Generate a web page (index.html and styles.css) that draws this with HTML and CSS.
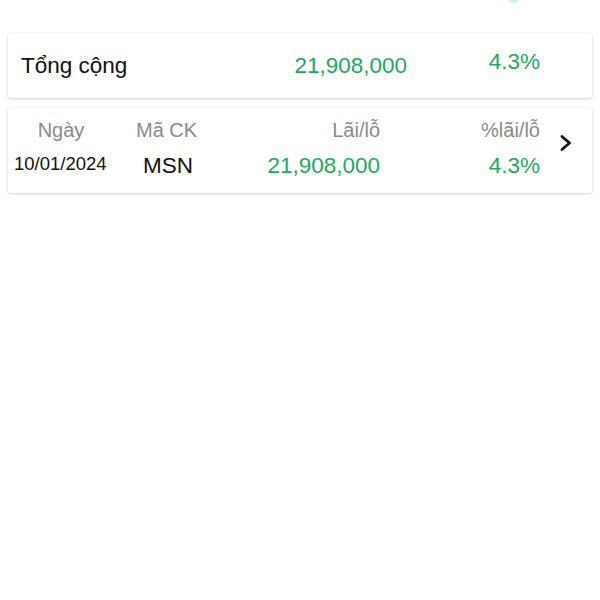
FILE: index.html
```html
<!DOCTYPE html>
<html lang="vi">
<head>
  <meta charset="UTF-8" />
  <meta name="viewport" content="width=device-width, initial-scale=1.0"/>
  <title>Lãi/lỗ</title>
  <link rel="stylesheet" href="styles.css">
</head>
<body>

<!-- Top strip (cut off) -->
<div class="top-strip">
  <span class="top-dot"></span>
</div>

<!-- Total -->
<div class="card total">
  <div class="total-label">Tổng cộng</div>
  <div class="total-value green">21,908,000</div>
  <div class="total-pct green">4.3%</div>
</div>

<!-- Detail row -->
<div class="card detail">
  <div class="detail-grid">
    <div class="head c-date">Ngày</div>
    <div class="head c-code">Mã CK</div>
    <div class="head c-pl">Lãi/lỗ</div>
    <div class="head c-pct">%lãi/lỗ</div>

    <div class="cell c-date date">10/01/2024</div>
    <div class="cell c-code code">MSN</div>
    <div class="cell c-pl green">21,908,000</div>
    <div class="cell c-pct green">4.3%</div>
  </div>
  <svg class="chevron" width="14" height="20" viewBox="0 0 14 20">
    <path d="M3 3.5 L10.5 10 L3 16.5" fill="none" stroke="#111" stroke-width="2.8" stroke-linecap="round" stroke-linejoin="round"/>
  </svg>
</div>

</body>
</html>
```

FILE: styles.css
```css
* {
  margin: 0;
  padding: 0;
  box-sizing: border-box;
}

body {
  font-family: 'Liberation Sans', Arial, sans-serif;
  background: #fff;
  color: #111;
  width: 600px;
  height: 600px;
  overflow: hidden;
}

.top-strip {
  height: 33px;
  position: relative;
}

.top-dot {
  position: absolute;
  left: 508px;
  top: -6px;
  width: 11px;
  height: 9px;
  border-radius: 50%;
  background: #b5e6e8;
  opacity: 0.6;
}

.card {
  margin: 0 8px;
  background: #fff;
  border-radius: 2px;
  box-shadow: 0 1px 3px rgba(0, 0, 0, 0.18), 0 0 1px rgba(0, 0, 0, 0.08);
}

.green {
  color: #1fa862;
}

.total {
  height: 65px;
  display: flex;
  align-items: center;
  padding: 0 0 0 13px;
  font-size: 22.5px;
}

.total-label {
  width: 260px;
}

.total-value {
  width: 126px;
  text-align: right;
}

.total-pct {
  width: 133px;
  text-align: right;
  margin-top: -8px;
}

.detail {
  margin-top: 10px;
  height: 85px;
  position: relative;
  padding: 9px 0 0 6px;
}

.detail-grid {
  display: grid;
  grid-template-columns: 94px 90px 182px 160px;
  grid-template-rows: 26px 46px;
  align-items: center;
}

.head {
  font-size: 20px;
  color: #8a8a8a;
}

.cell {
  font-size: 22.5px;
}

.c-date {
  text-align: center;
}

.date {
  font-size: 18.5px;
  text-align: left;
  margin-top: -4px;
}

.c-code {
  padding-left: 28px;
}

.code {
  padding-left: 35px;
}

.c-pl,
.c-pct {
  text-align: right;
}

.chevron {
  position: absolute;
  left: 551px;
  top: 25px;
}
```
